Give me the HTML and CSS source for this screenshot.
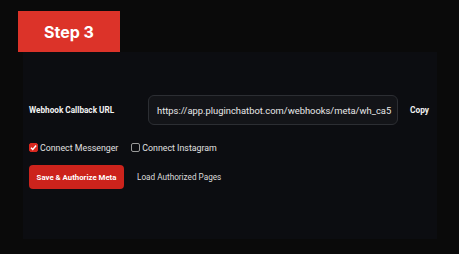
FILE: index.html
```html
<!DOCTYPE html>
<html>
<head>
<meta charset="utf-8">
<link rel="stylesheet" href="styles.css">
</head>
<body>
<div class="step">Step 3</div>
<section class="panel">
  <div class="row">
    <span class="label">Webhook Callback URL</span>
    <div class="input"><span>https://app.pluginchatbot.com/webhooks/meta/wh_ca5</span></div>
    <span class="copy">Copy</span>
  </div>
  <div class="checks">
    <label class="check"><span class="box on"><svg viewBox="0 0 10 10" width="10" height="10"><path d="M2.2 5.2 L4.2 7.2 L7.9 2.8" fill="none" stroke="#fff" stroke-width="1.6"/></svg></span>Connect Messenger</label>
    <label class="check"><span class="box"></span>Connect Instagram</label>
  </div>
  <div class="actions">
    <span class="btn">Save &amp; Authorize Meta</span>
    <span class="link">Load Authorized Pages</span>
  </div>
</section>
</body>
</html>
```
FILE: styles.css
```css
html, body {
  margin: 0;
  padding: 0;
  background: #0a0a0a;
  font-family: Roboto, "Liberation Sans", sans-serif;
  color: #e6e6e6;
}
body {
  width: 459px;
  height: 254px;
  overflow: hidden;
}
.step {
  margin: 11px 0 0 18px;
  width: 102px;
  height: 41px;
  background: #dc3329;
  color: #fff;
  font-weight: 700;
  font-size: 16px;
  display: flex;
  align-items: center;
  justify-content: center;
  font-family: Inter, Roboto, sans-serif;
}
.panel {
  margin-left: 23px;
  width: 414px;
  height: 187px;
  box-sizing: border-box;
  background: #0c0d11;
  padding: 43px 0 0 6px;
}
.row {
  display: flex;
  align-items: center;
  height: 30px;
}
.label {
  width: 119px;
  flex-shrink: 0;
  font-size: 8.2px;
  font-weight: 700;
  color: #f2f2f2;
}
.input {
  width: 250px;
  height: 30px;
  flex-shrink: 0;
  box-sizing: border-box;
  border: 1px solid #2c2e33;
  border-radius: 6px;
  background: #131418;
  display: flex;
  align-items: center;
  padding: 0 8px;
  overflow: hidden;
  white-space: nowrap;
  font-size: 9.4px;
  color: #e8e8e8;
}
.copy {
  margin-left: 12px;
  font-size: 8.4px;
  font-weight: 700;
  color: #f0f0f0;
}
.checks {
  display: flex;
  gap: 13px;
  margin-top: 17px;
  height: 11px;
  align-items: center;
}
.check {
  display: flex;
  align-items: center;
  gap: 2px;
  font-size: 8.8px;
  color: #e0e0e0;
}
.box {
  width: 9px;
  height: 9px;
  box-sizing: border-box;
  border: 1px solid #9a9a9a;
  border-radius: 2px;
  display: inline-flex;
  overflow: hidden;
}
.box.on {
  background: #d9281f;
  border-color: #d9281f;
}
.box.on svg { margin: -1px; width: 9px; height: 9px; }
.actions {
  display: flex;
  align-items: center;
  gap: 13px;
  margin-top: 12px;
}
.btn {
  width: 95px;
  height: 24px;
  border-radius: 4px;
  background: #cc231c;
  color: #fff;
  font-size: 7.8px;
  font-weight: 700;
  display: flex;
  align-items: center;
  justify-content: center;
}
.link {
  font-size: 8.2px;
  font-weight: 400;
  color: #dcdcdc;
}
```
